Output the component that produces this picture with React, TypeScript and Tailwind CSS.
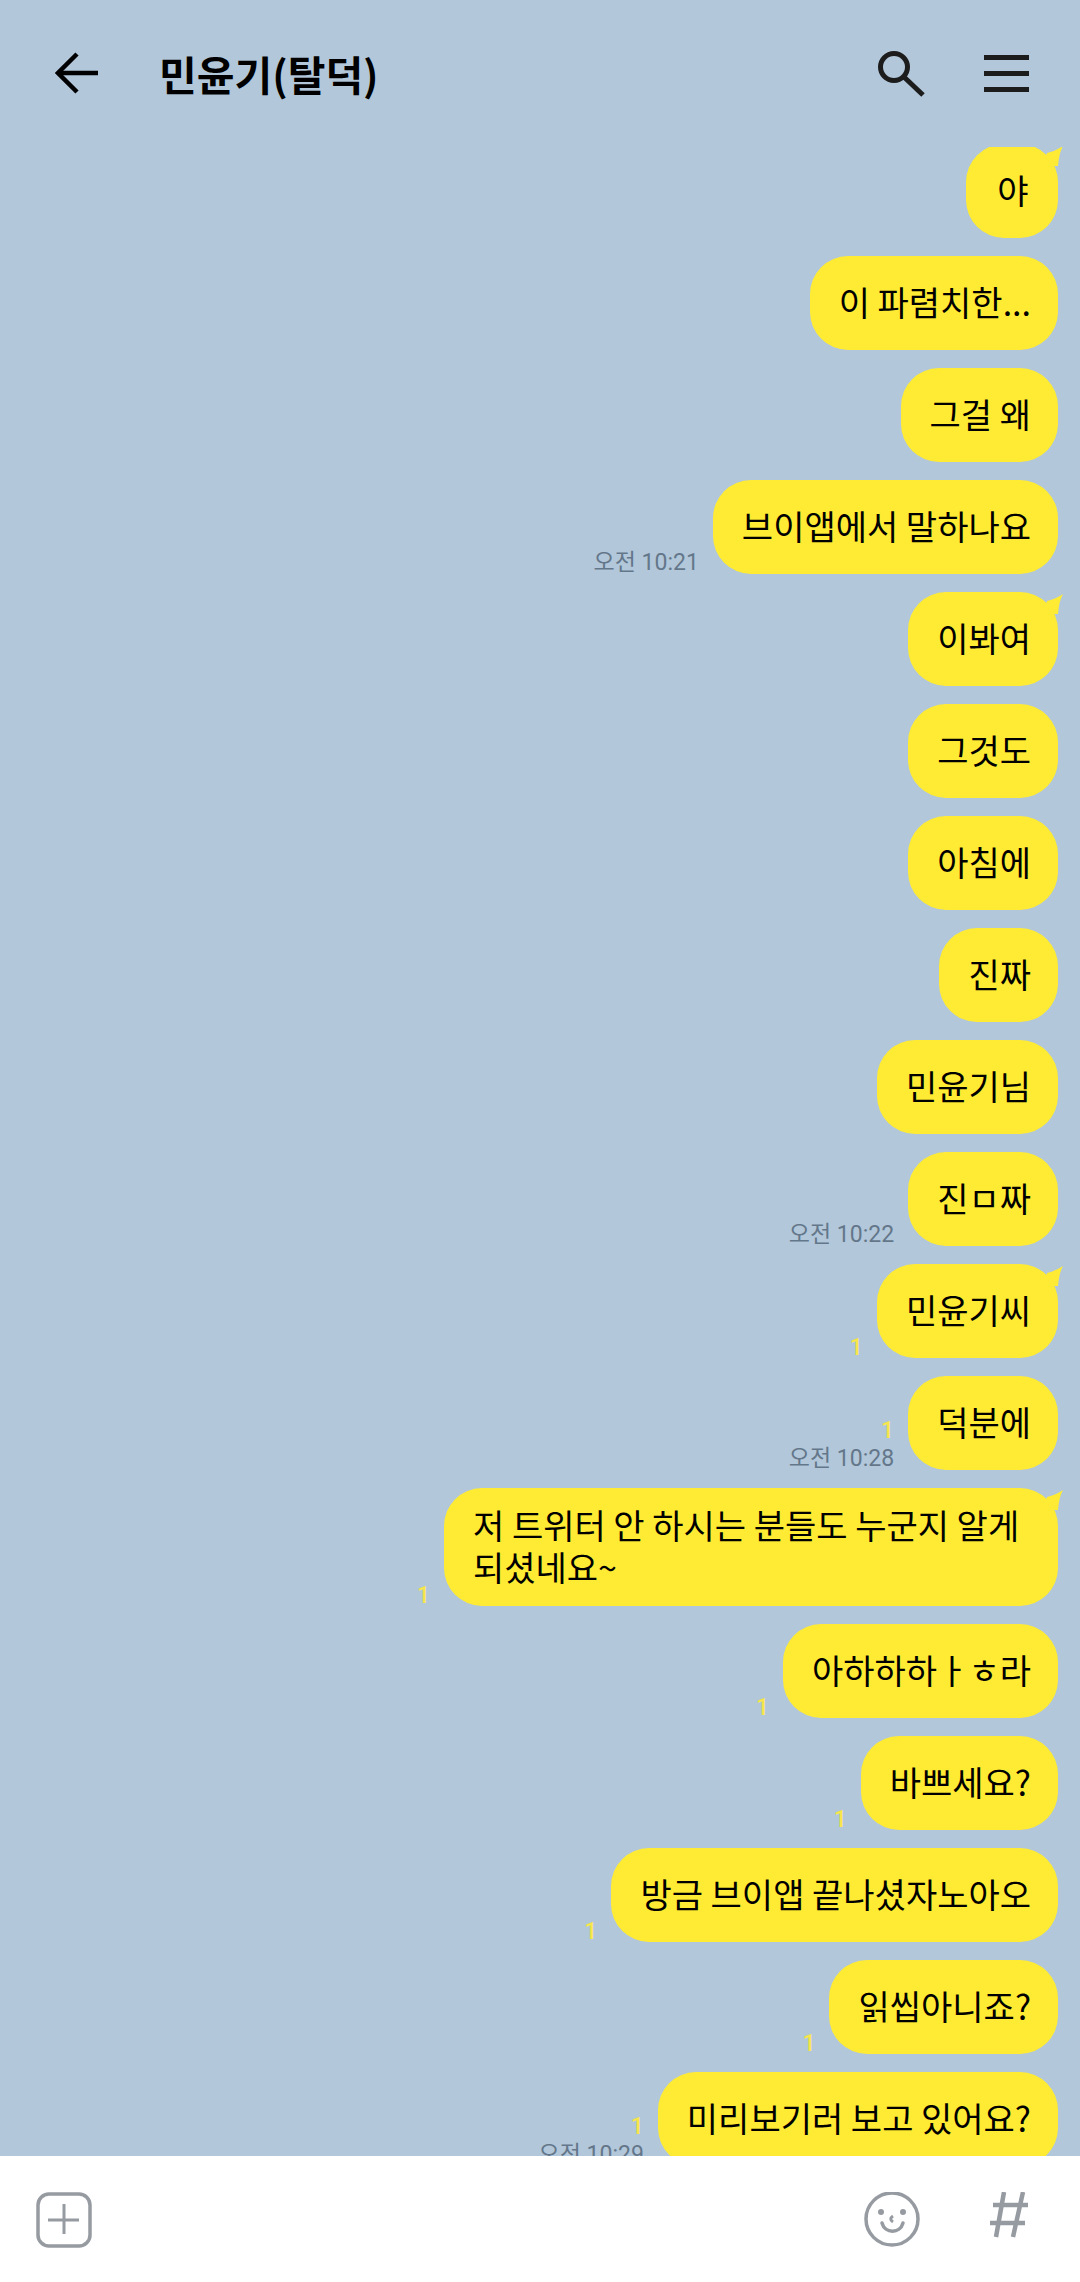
const FONT = "font-['Noto_Sans_CJK_KR','Noto_Sans',sans-serif]";

type Message = {
  text: string;
  tail?: boolean;
  unread?: boolean;
  time?: string;
};

const MESSAGES: Message[] = [
  { text: '야', tail: true },
  { text: '이 파렴치한...' },
  { text: '그걸 왜' },
  { text: '브이앱에서 말하나요', time: '오전 10:21' },
  { text: '이봐여', tail: true },
  { text: '그것도' },
  { text: '아침에' },
  { text: '진짜' },
  { text: '민윤기님' },
  { text: '진ㅁ짜', time: '오전 10:22' },
  { text: '민윤기씨', tail: true, unread: true },
  { text: '덕분에', unread: true, time: '오전 10:28' },
  { text: '저 트위터 안 하시는 분들도 누군지 알게 되셨네요~', tail: true, unread: true },
  { text: '아하하하ㅏㅎ라', unread: true },
  { text: '바쁘세요?', unread: true },
  { text: '방금 브이앱 끝나셨자노아오', unread: true },
  { text: '읽씹아니죠?', unread: true },
  { text: '미리보기러 보고 있어요?', unread: true, time: '오전 10:29' },
];

function Bubble({ message }: { message: Message }) {
  return (
    <div className="flex items-end justify-end gap-[14px]">
      {(message.unread || message.time) && (
        <div className="-mb-[3px] flex flex-col items-end font-['Roboto','Noto_Sans_CJK_KR',sans-serif] text-[23px] leading-[29px]">
          {message.unread && <span className="relative top-[1px] font-medium text-[#f7e64b]">1</span>}
          {message.time && <span className="text-[#64778a]">{message.time}</span>}
        </div>
      )}
      <div className="relative flex min-h-[94px] max-w-[614px] min-w-[92px] items-center justify-center rounded-[38px] bg-[#ffeb33] py-[17px] pr-[27px] pl-[29px] text-[34px] leading-[42px] text-black">
        {message.tail && (
          <svg className="absolute top-0 right-[-5px]" width="20" height="22" viewBox="0 0 20 22">
            <path d="M4 9 Q13 7 20 2 Q16 9 15 22 L0 22 Z" fill="#ffeb33" />
          </svg>
        )}
        <span className="relative -top-[1px]">{message.text}</span>
      </div>
    </div>
  );
}

export default function App() {
  return (
    <div className={`flex h-[2282px] w-[1080px] flex-col overflow-hidden bg-[#b2c7da] ${FONT}`}>
      <header className="flex h-[147px] shrink-0 items-start pt-[49px] pr-[51px] pl-[55px]">
        <svg width="44" height="42" viewBox="0 0 44 42" fill="none" stroke="#000" strokeWidth="4.5" className="mt-[3px]">
          <path d="M43 21 H4" />
          <path d="M22 2 L3 21 L22 40" />
        </svg>
        <h1 className="ml-[60px] text-[41px] leading-[48px] font-bold text-black">민윤기(탈덕)</h1>
        <svg width="48" height="48" viewBox="0 0 48 48" fill="none" stroke="#1c1c1c" strokeWidth="5" className="mt-[1px] ml-auto">
          <circle cx="16" cy="17" r="13.5" />
          <path d="M26 27 L45 45" />
        </svg>
        <div className="mt-[6px] ml-[58px] flex h-[37px] w-[45px] flex-col justify-between">
          <div className="h-[5px] bg-[#1c1c1c]" />
          <div className="h-[5px] bg-[#1c1c1c]" />
          <div className="h-[5px] bg-[#1c1c1c]" />
        </div>
      </header>

      <main className="min-h-0 flex-1 overflow-hidden">
        <div className="-mt-[3px] flex flex-col gap-[18px] pr-[22px]">
          {MESSAGES.map((m) => (
            <Bubble key={m.text} message={m} />
          ))}
        </div>
      </main>

      <footer className="flex h-[126px] shrink-0 items-start bg-white pt-[36px] pr-[52px] pl-[36px]">
        <svg width="56" height="56" viewBox="0 0 56 56" fill="none" stroke="#969aa1">
          <rect x="2" y="2" width="52" height="52" rx="11" strokeWidth="3.5" />
          <path d="M28 12 V42 M12 28 H43" strokeWidth="3" />
        </svg>
        <svg width="56" height="56" viewBox="0 0 56 56" fill="none" stroke="#969aa1" className="ml-auto">
          <circle cx="28" cy="27" r="26" strokeWidth="3.5" />
          <circle cx="17" cy="20" r="3" fill="#969aa1" stroke="none" />
          <circle cx="39" cy="20" r="3" fill="#969aa1" stroke="none" />
          <path d="M29 24 C26 26 26 28 29 30" strokeWidth="3" />
          <path d="M18 31 C21 42 36 42 39 31" strokeWidth="3.5" strokeLinecap="round" />
        </svg>
        <svg width="38" height="46" viewBox="0 0 38 46" fill="none" stroke="#969aa1" strokeWidth="4.5" className="ml-[70px]">
          <path d="M14 0 L6 45 M33 0 L23 45 M3 13 H38 M0 31 H35" />
        </svg>
      </footer>
    </div>
  );
}
